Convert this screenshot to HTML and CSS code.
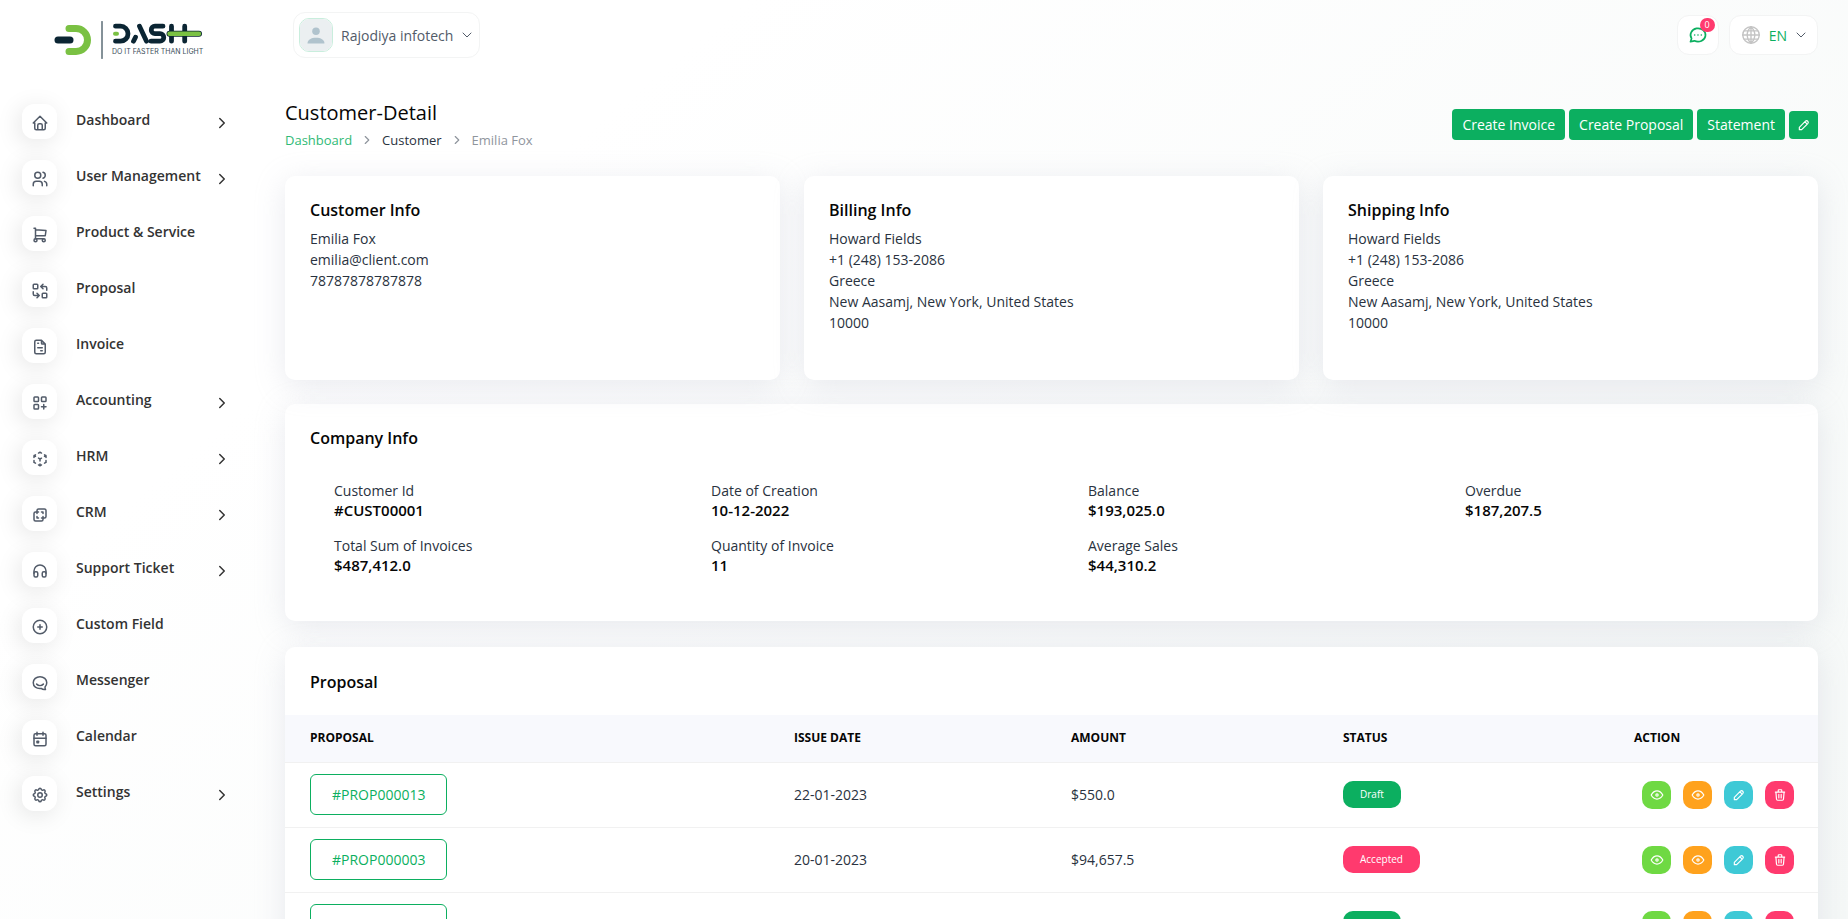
FILE: index.html
```
<!DOCTYPE html>
<html lang="en">
  <head>
    <meta charset="UTF-8">
    <meta name="viewport" content="width=device-width, initial-scale=1.0">
    <title>Customer-Detail</title>
    <link rel="stylesheet" href="styles.css">
  </head>
  <body>
    <svg class="sprite" xmlns="http://www.w3.org/2000/svg">
      <symbol id="chevron-right" viewBox="0 0 24 24"><path d="M9 6l6 6l-6 6"/></symbol>
      <symbol id="chevron-down" viewBox="0 0 24 24"><path d="M4 8l8 8l8 -8"/></symbol>
      <symbol id="home" viewBox="0 0 24 24"><path d="M5 12H3l9 -9l9 9h-2M5 12v7a2 2 0 0 0 2 2h10a2 2 0 0 0 2 -2v-7M9 21v-6a2 2 0 0 1 2 -2h2a2 2 0 0 1 2 2v6"/></symbol>
      <symbol id="users" viewBox="0 0 24 24"><circle cx="9" cy="7" r="4"/><path d="M3 21v-2a4 4 0 0 1 4 -4h4a4 4 0 0 1 4 4v2M16 3.13a4 4 0 0 1 0 7.75M21 21v-2a4 4 0 0 0 -3 -3.85"/></symbol>
      <symbol id="cart" viewBox="0 0 24 24"><circle cx="6" cy="19" r="2"/><circle cx="17" cy="19" r="2"/><path d="M17 17H6V3H4M6 5l14 1l-1 7H6"/></symbol>
      <symbol id="replace" viewBox="0 0 24 24"><rect x="3" y="3" width="6" height="6" rx="1"/><rect x="15" y="15" width="6" height="6" rx="1"/><path d="M21 11V8a2 2 0 0 0 -2 -2h-6l3 3m0 -6l-3 3M3 13v3a2 2 0 0 0 2 2h6l-3 -3m0 6l3 -3"/></symbol>
      <symbol id="invoice" viewBox="0 0 24 24"><path d="M14 3v4a1 1 0 0 0 1 1h4M17 21H7a2 2 0 0 1 -2 -2V5a2 2 0 0 1 2 -2h7l5 5v11a2 2 0 0 1 -2 2zM9 7h1M9 13h6M13 17h2"/></symbol>
      <symbol id="grid" viewBox="0 0 24 24"><rect x="4" y="4" width="6" height="6" rx="1"/><rect x="14" y="4" width="6" height="6" rx="1"/><rect x="4" y="14" width="6" height="6" rx="1"/><path d="M14 17h6M17 14v6"/></symbol>
      <symbol id="cube" viewBox="0 0 24 24"><path d="M6 17.6l-2 -1.1V14M4 10V7.5l2 -1.1M10 4.1L12 3l2 1.1M18 6.4l2 1.1V10M20 14v2.5l-2 1.12M14 19.9L12 21l-2 -1.1M12 12l2 -1.1M18 8.6l2 -1.1M12 12v2.5M12 18.5V21M12 12l-2 -1.12M6 8.6L4 7.5"/></symbol>
      <symbol id="layers" viewBox="0 0 24 24"><path d="M16 16v2a2 2 0 0 1 -2 2H6a2 2 0 0 1 -2 -2v-8a2 2 0 0 1 2 -2h2V6a2 2 0 0 1 2 -2h8a2 2 0 0 1 2 2v8a2 2 0 0 1 -2 2h-2M10 8H8v2M8 14v2h2M14 8h2v2M16 14v2h-2"/></symbol>
      <symbol id="headphones" viewBox="0 0 24 24"><rect x="4" y="13" width="5" height="7" rx="2"/><rect x="15" y="13" width="5" height="7" rx="2"/><path d="M4 15v-3a8 8 0 0 1 16 0v3"/></symbol>
      <symbol id="plus" viewBox="0 0 24 24"><circle cx="12" cy="12" r="9"/><path d="M9 12h6M12 9v6"/></symbol>
      <symbol id="messenger" viewBox="0 0 24 24"><path d="M17.8 20.8a6 6 0 0 1 -4.2 -1.6C7 20 3 16.500 3 11.700C3 7 7 3.500 12 3.500s9 3.500 9 8.200c0 2.500 -1 4.300 -2.300 5.600c0 1.300 .1 2.500 .6 3.500zM7.500 13.500c2.500 2.500 6.500 2.500 9 0"/></symbol>
      <symbol id="calendar" viewBox="0 0 24 24"><rect x="4" y="5" width="16" height="16" rx="2"/><path d="M16 3v4M8 3v4M4 11h16"/><rect x="8" y="15" width="2" height="2"/></symbol>
      <symbol id="settings" viewBox="0 0 24 24"><path d="M10.325 4.317c.426 -1.756 2.924 -1.756 3.350 0a1.724 1.724 0 0 0 2.573 1.066c1.543 -.94 3.310 .826 2.370 2.370a1.724 1.724 0 0 0 1.065 2.572c1.756 .426 1.756 2.924 0 3.350a1.724 1.724 0 0 0 -1.066 2.573c.94 1.543 -.826 3.310 -2.370 2.370a1.724 1.724 0 0 0 -2.572 1.065c-.426 1.756 -2.924 1.756 -3.350 0a1.724 1.724 0 0 0 -2.573 -1.066c-1.543 .94 -3.310 -.826 -2.370 -2.370a1.724 1.724 0 0 0 -1.065 -2.572c-1.756 -.426 -1.756 -2.924 0 -3.350a1.724 1.724 0 0 0 1.066 -2.573c-.94 -1.543 .826 -3.310 2.370 -2.370c1 .608 2.296 .07 2.572 -1.065z"/><circle cx="12" cy="12" r="3"/></symbol>
      <symbol id="pencil" viewBox="0 0 24 24"><path d="M4 20h4L18.500 9.500a2.830 2.830 0 0 0 -4 -4L4 16v4M13.500 6.500l4 4"/></symbol>
      <symbol id="eye" viewBox="0 0 24 24"><circle cx="12" cy="12" r="2"/><path d="M22 12c-2.667 4.667 -6 7 -10 7s-7.333 -2.333 -10 -7c2.667 -4.667 6 -7 10 -7s7.333 2.333 10 7"/></symbol>
      <symbol id="trash" viewBox="0 0 24 24"><path d="M4 7h16M10 11v6M14 11v6M5 7l1 12a2 2 0 0 0 2 2h8a2 2 0 0 0 2 -2l1 -12M9 7V4a1 1 0 0 1 1 -1h4a1 1 0 0 1 1 1v3"/></symbol>
      <symbol id="chat" viewBox="0 0 24 24"><path d="M3 20l1.300 -3.900a9 8 0 1 1 3.400 2.900L3 20M12 12v.01M8 12v.01M16 12v.01"/></symbol>
      <symbol id="world" viewBox="0 0 24 24"><circle cx="12" cy="12" r="9"/><path d="M3 12h18M4.500 7.500h15M4.500 16.500h15M12 3v18M12 3c-5.500 5 -5.500 13 0 18M12 3c5.500 5 5.500 13 0 18"/></symbol>
    </svg>

    <aside class="sidebar">
      <a href="#" class="logo" aria-label="Dash">
        <svg width="152" height="40" viewBox="0 0 152 40">
          <g fill="none" stroke-linecap="round" stroke-linejoin="round">
            <path d="M15 8.500h7a11.500 11.500 0 0 1 0 23h-7" stroke="#7ac143" stroke-width="7"/>
            <path d="M4 20h12" stroke="#0b2533" stroke-width="7"/>
            <path d="M48 1.500v37" stroke="#0b2533" stroke-width="1"/>
            <path d="M61.500 6.200h5a7.500 7.500 0 0 1 0 15h-5M79.500 21.200l2 -4M85.500 6.200l7 15M109 6.200h-8a3.700 3.700 0 0 0 0 7.500h5a3.700 3.700 0 0 1 0 7.500h-9M117.500 6.200v15M130.700 6.200v15" stroke="#0b2533" stroke-width="4.800"/>
            <path d="M61 13.700h2" stroke="#7ac143" stroke-width="4"/>
            <path d="M115.500 13.700h29.500" stroke="#0b2533" stroke-width="6"/>
            <path d="M115.500 13.700h29.500" stroke="#7ac143" stroke-width="4.400"/>
          </g>
          <text class="logo-text" x="58" y="34">DO IT FASTER THAN LIGHT</text>
        </svg>
      </a>
      <nav class="menu">
        <a href="#"><span class="menu-icon"><svg><use href="#home"/></svg></span><span class="menu-text">Dashboard</span><svg class="arrow"><use href="#chevron-right"/></svg></a>
        <a href="#"><span class="menu-icon"><svg><use href="#users"/></svg></span><span class="menu-text">User Management</span><svg class="arrow"><use href="#chevron-right"/></svg></a>
        <a href="#"><span class="menu-icon"><svg><use href="#cart"/></svg></span><span class="menu-text">Product &amp; Service</span></a>
        <a href="#"><span class="menu-icon"><svg><use href="#replace"/></svg></span><span class="menu-text">Proposal</span></a>
        <a href="#"><span class="menu-icon"><svg><use href="#invoice"/></svg></span><span class="menu-text">Invoice</span></a>
        <a href="#"><span class="menu-icon"><svg><use href="#grid"/></svg></span><span class="menu-text">Accounting</span><svg class="arrow"><use href="#chevron-right"/></svg></a>
        <a href="#"><span class="menu-icon"><svg><use href="#cube"/></svg></span><span class="menu-text">HRM</span><svg class="arrow"><use href="#chevron-right"/></svg></a>
        <a href="#"><span class="menu-icon"><svg><use href="#layers"/></svg></span><span class="menu-text">CRM</span><svg class="arrow"><use href="#chevron-right"/></svg></a>
        <a href="#"><span class="menu-icon"><svg><use href="#headphones"/></svg></span><span class="menu-text">Support Ticket</span><svg class="arrow"><use href="#chevron-right"/></svg></a>
        <a href="#"><span class="menu-icon"><svg><use href="#plus"/></svg></span><span class="menu-text">Custom Field</span></a>
        <a href="#"><span class="menu-icon"><svg><use href="#messenger"/></svg></span><span class="menu-text">Messenger</span></a>
        <a href="#"><span class="menu-icon"><svg><use href="#calendar"/></svg></span><span class="menu-text">Calendar</span></a>
        <a href="#"><span class="menu-icon"><svg><use href="#settings"/></svg></span><span class="menu-text">Settings</span><svg class="arrow"><use href="#chevron-right"/></svg></a>
      </nav>
    </aside>

    <main class="content">
      <header class="topbar">
        <button class="profile">
          <svg class="avatar" viewBox="0 0 34 34"><rect width="34" height="34" fill="#ebeff1"/><circle cx="17" cy="13" r="4" fill="#b0c3cd"/><path d="M8 26c0-4 4-6 9-6s9 2 9 6z" fill="#b0c3cd"/></svg>
          Rajodiya infotech
          <svg class="caret"><use href="#chevron-down"/></svg>
        </button>
        <div class="topbar-right">
          <button class="chat" aria-label="Messages"><svg><use href="#chat"/></svg><span class="count">0</span></button>
          <button class="lang"><svg class="world"><use href="#world"/></svg>EN<svg class="caret"><use href="#chevron-down"/></svg></button>
        </div>
      </header>

      <div class="page-header">
        <div>
          <h1>Customer-Detail</h1>
          <nav class="breadcrumb">
            <a href="#">Dashboard</a>
            <svg><use href="#chevron-right"/></svg>
            <a href="#" class="dark">Customer</a>
            <svg><use href="#chevron-right"/></svg>
            <span>Emilia Fox</span>
          </nav>
        </div>
        <div class="buttons">
          <button class="btn">Create Invoice</button>
          <button class="btn">Create Proposal</button>
          <button class="btn">Statement</button>
          <button class="btn btn-icon" aria-label="Edit"><svg><use href="#pencil"/></svg></button>
        </div>
      </div>

      <div class="info-row">
        <section class="card info">
          <h2>Customer Info</h2>
          <p>Emilia Fox</p>
          <p>emilia@client.com</p>
          <p>78787878787878</p>
        </section>
        <section class="card info">
          <h2>Billing Info</h2>
          <p>Howard Fields</p>
          <p>+1 (248) 153-2086</p>
          <p>Greece</p>
          <p>New Aasamj, New York, United States</p>
          <p>10000</p>
        </section>
        <section class="card info">
          <h2>Shipping Info</h2>
          <p>Howard Fields</p>
          <p>+1 (248) 153-2086</p>
          <p>Greece</p>
          <p>New Aasamj, New York, United States</p>
          <p>10000</p>
        </section>
      </div>

      <section class="card company">
        <h2>Company Info</h2>
        <dl class="stats">
          <div><dt>Customer Id</dt><dd>#CUST00001</dd></div>
          <div><dt>Date of Creation</dt><dd>10-12-2022</dd></div>
          <div><dt>Balance</dt><dd>$193,025.0</dd></div>
          <div><dt>Overdue</dt><dd>$187,207.5</dd></div>
          <div><dt>Total Sum of Invoices</dt><dd>$487,412.0</dd></div>
          <div><dt>Quantity of Invoice</dt><dd>11</dd></div>
          <div><dt>Average Sales</dt><dd>$44,310.2</dd></div>
        </dl>
      </section>

      <section class="card proposal">
        <h2>Proposal</h2>
        <table>
          <colgroup><col class="col-proposal"><col class="col-date"><col class="col-amount"><col class="col-status"><col class="col-action"></colgroup>
          <thead>
            <tr><th>Proposal</th><th>Issue Date</th><th>Amount</th><th>Status</th><th>Action</th></tr>
          </thead>
          <tbody>
            <tr>
              <td><a href="#" class="number">#PROP000013</a></td>
              <td>22-01-2023</td>
              <td>$550.0</td>
              <td><span class="badge green">Draft</span></td>
              <td><div class="actions"><button class="lime" aria-label="Convert"><svg><use href="#eye"/></svg></button><button class="orange" aria-label="View"><svg><use href="#eye"/></svg></button><button class="cyan" aria-label="Edit"><svg><use href="#pencil"/></svg></button><button class="pink" aria-label="Delete"><svg><use href="#trash"/></svg></button></div></td>
            </tr>
            <tr>
              <td><a href="#" class="number">#PROP000003</a></td>
              <td>20-01-2023</td>
              <td>$94,657.5</td>
              <td><span class="badge pink">Accepted</span></td>
              <td><div class="actions"><button class="lime" aria-label="Convert"><svg><use href="#eye"/></svg></button><button class="orange" aria-label="View"><svg><use href="#eye"/></svg></button><button class="cyan" aria-label="Edit"><svg><use href="#pencil"/></svg></button><button class="pink" aria-label="Delete"><svg><use href="#trash"/></svg></button></div></td>
            </tr>
            <tr>
              <td><a href="#" class="number">#PROP000002</a></td>
              <td></td>
              <td></td>
              <td><span class="badge green">Draft</span></td>
              <td><div class="actions"><button class="lime" aria-label="Convert"><svg><use href="#eye"/></svg></button><button class="orange" aria-label="View"><svg><use href="#eye"/></svg></button><button class="cyan" aria-label="Edit"><svg><use href="#pencil"/></svg></button><button class="pink" aria-label="Delete"><svg><use href="#trash"/></svg></button></div></td>
            </tr>
          </tbody>
        </table>
      </section>
    </main>
  </body>
</html>
```
FILE: styles.css
```
* {
  box-sizing: border-box;
}
html {
  scrollbar-width: none;
}
body {
  margin: 0;
  min-height: 100vh;
  display: flex;
  font-family: "Open Sans", sans-serif;
  font-size: 14px;
  line-height: 21px;
  color: #293240;
  background: linear-gradient(141deg, #ffffff 25%, #f5f8f7 100%) fixed;
}
a {
  color: inherit;
  text-decoration: none;
}
button {
  font: inherit;
  border: 0;
  cursor: pointer;
}
h1, h2, p, dl, dd {
  margin: 0;
}
svg {
  fill: none;
  stroke: currentColor;
  stroke-width: 2;
  stroke-linecap: round;
  stroke-linejoin: round;
  flex: none;
}
.sprite {
  display: none;
}

/* sidebar */
.sidebar {
  width: 285px;
  flex: none;
}
.logo {
  display: block;
  height: 104px;
  padding: 20px 0 0 54px;
}
.logo svg {
  stroke: none;
}
.logo-text {
  font-family: Inter, sans-serif;
  font-size: 7px;
  fill: #3a4d58;
}
.menu a {
  display: flex;
  align-items: flex-start;
  height: 56px;
  padding: 0 54px 0 22px;
  color: #333333;
}
.menu-icon {
  display: flex;
  align-items: center;
  justify-content: center;
  width: 35px;
  height: 35px;
  padding-top: 2px;
  margin-right: 19px;
  border-radius: 12px;
  background: #ffffff;
  color: #525b69;
  box-shadow: -3px 4px 23px rgba(0, 0, 0, 0.1);
}
.menu-icon svg {
  width: 18px;
  height: 18px;
}
.menu-text {
  flex: 1;
  padding-top: 5px;
  font-weight: 600;
}
.arrow {
  width: 18px;
  height: 18px;
  margin-top: 10px;
}

/* top bar */
.content {
  flex: 1;
  min-width: 0;
  padding-right: 30px;
}
.topbar {
  display: flex;
  align-items: center;
  justify-content: space-between;
  height: 70px;
  padding-left: 8px;
}
.profile, .chat, .lang {
  display: flex;
  align-items: center;
  border: 1px solid #f3f4f4;
  border-radius: 12px;
  background: #ffffff;
  color: #525b69;
}
.profile {
  height: 46px;
  padding: 0 5px;
  font-weight: 500;
}
.avatar {
  width: 34px;
  height: 34px;
  margin-right: 8px;
  border-radius: 10px;
  border: 1px solid #c9eedd;
  stroke: none;
}
.caret {
  width: 12px;
  height: 12px;
  margin: 0 1px 0 8px;
}
.topbar-right {
  display: flex;
  gap: 10px;
}
.chat {
  position: relative;
  width: 42px;
  height: 40px;
  padding: 0 10px;
  color: #0caf60;
}
.chat svg {
  width: 20px;
  height: 20px;
}
.count {
  position: absolute;
  top: 2px;
  right: 3px;
  width: 15px;
  height: 14px;
  border-radius: 7px;
  background: #ff3a6e;
  color: #ffffff;
  font-size: 9px;
  line-height: 14px;
  text-align: center;
}
.lang {
  height: 40px;
  padding: 0 9px 0 10px;
  color: #0caf60;
  font-weight: 500;
}
.world {
  width: 22px;
  height: 22px;
  margin-right: 7px;
  color: #c4c4c4;
  stroke-width: 1.5;
}
.lang .caret {
  color: #525b69;
}

/* page title */
.page-header {
  display: flex;
  align-items: center;
  justify-content: space-between;
  height: 106px;
  padding-top: 3px;
}
h1 {
  font-size: 20px;
  line-height: 26px;
  font-weight: 500;
  color: #060606;
}
.breadcrumb {
  display: flex;
  align-items: center;
  gap: 8px;
  margin-top: 4px;
  font-size: 13px;
  line-height: 20px;
  color: #8f959d;
}
.breadcrumb a {
  color: #2fba76;
}
.breadcrumb .dark {
  color: #293240;
}
.breadcrumb svg {
  width: 14px;
  height: 14px;
}
.buttons {
  display: flex;
  align-items: center;
  gap: 4px;
}
.btn {
  height: 31px;
  padding: 0 10px;
  border-radius: 4px;
  background: #0caf60;
  color: #ffffff;
  font-weight: 500;
}
.btn-icon {
  display: flex;
  align-items: center;
  justify-content: center;
  width: 29px;
  height: 28px;
  padding: 0;
}
.btn-icon svg {
  width: 14px;
  height: 14px;
}

/* cards */
.card {
  border-radius: 10px;
  background: #ffffff;
  box-shadow: 0 6px 30px rgba(182, 186, 203, 0.3);
}
h2 {
  font-size: 16px;
  line-height: 20px;
  font-weight: 600;
  color: #060606;
}
.info-row {
  display: grid;
  grid-template-columns: repeat(3, 1fr);
  gap: 24px;
  margin-bottom: 24px;
}
.info {
  min-height: 204px;
  padding: 24px 25px;
}
.info h2 {
  margin-bottom: 8px;
}
.company {
  padding: 24px 0 47px 25px;
  margin-bottom: 24px;
}
.stats {
  display: grid;
  grid-template-columns: repeat(4, 1fr);
  row-gap: 17px;
  padding-top: 33px;
}
.stats div {
  padding-left: 24px;
  line-height: 20px;
}
.stats dd {
  font-size: 15px;
  line-height: 18px;
  font-weight: 600;
  color: #060606;
}

/* proposal table */
.proposal {
  margin-top: 26px;
}
.proposal h2 {
  padding: 25px 25px 23px;
}
table {
  width: 100%;
  table-layout: fixed;
  border-collapse: collapse;
}
.col-proposal { width: 484px; }
.col-date { width: 277px; }
.col-amount { width: 272px; }
.col-status { width: 291px; }
.col-action { width: 209px; }
th, td {
  padding: 0 0 0 25px;
  border-bottom: 1px solid #f1f1f1;
  text-align: left;
}
th {
  height: 47px;
  padding-bottom: 2px;
  background: #f8f9fd;
  color: #060606;
  font-size: 12px;
  font-weight: 700;
  text-transform: uppercase;
}
td {
  height: 65px;
}
.number {
  display: inline-block;
  padding: 9px 21px;
  border: 1px solid #0caf60;
  border-radius: 6px;
  color: #0caf60;
}
.badge {
  display: inline-block;
  padding: 0 17px;
  border-radius: 10px;
  color: #ffffff;
  font-size: 10px;
  font-weight: 500;
  line-height: 27px;
}
.actions {
  display: flex;
  gap: 12px;
  padding-left: 8px;
}
.actions button {
  display: flex;
  align-items: center;
  justify-content: center;
  width: 29px;
  height: 28px;
  padding: 0;
  border-radius: 10px;
  color: #ffffff;
}
.actions svg {
  width: 14px;
  height: 14px;
}
.green { background: #0caf60; }
.lime { background: #6fd943; }
.orange { background: #ffa21d; }
.cyan { background: #3ec9d6; }
.pink { background: #ff3a6e; }
```
